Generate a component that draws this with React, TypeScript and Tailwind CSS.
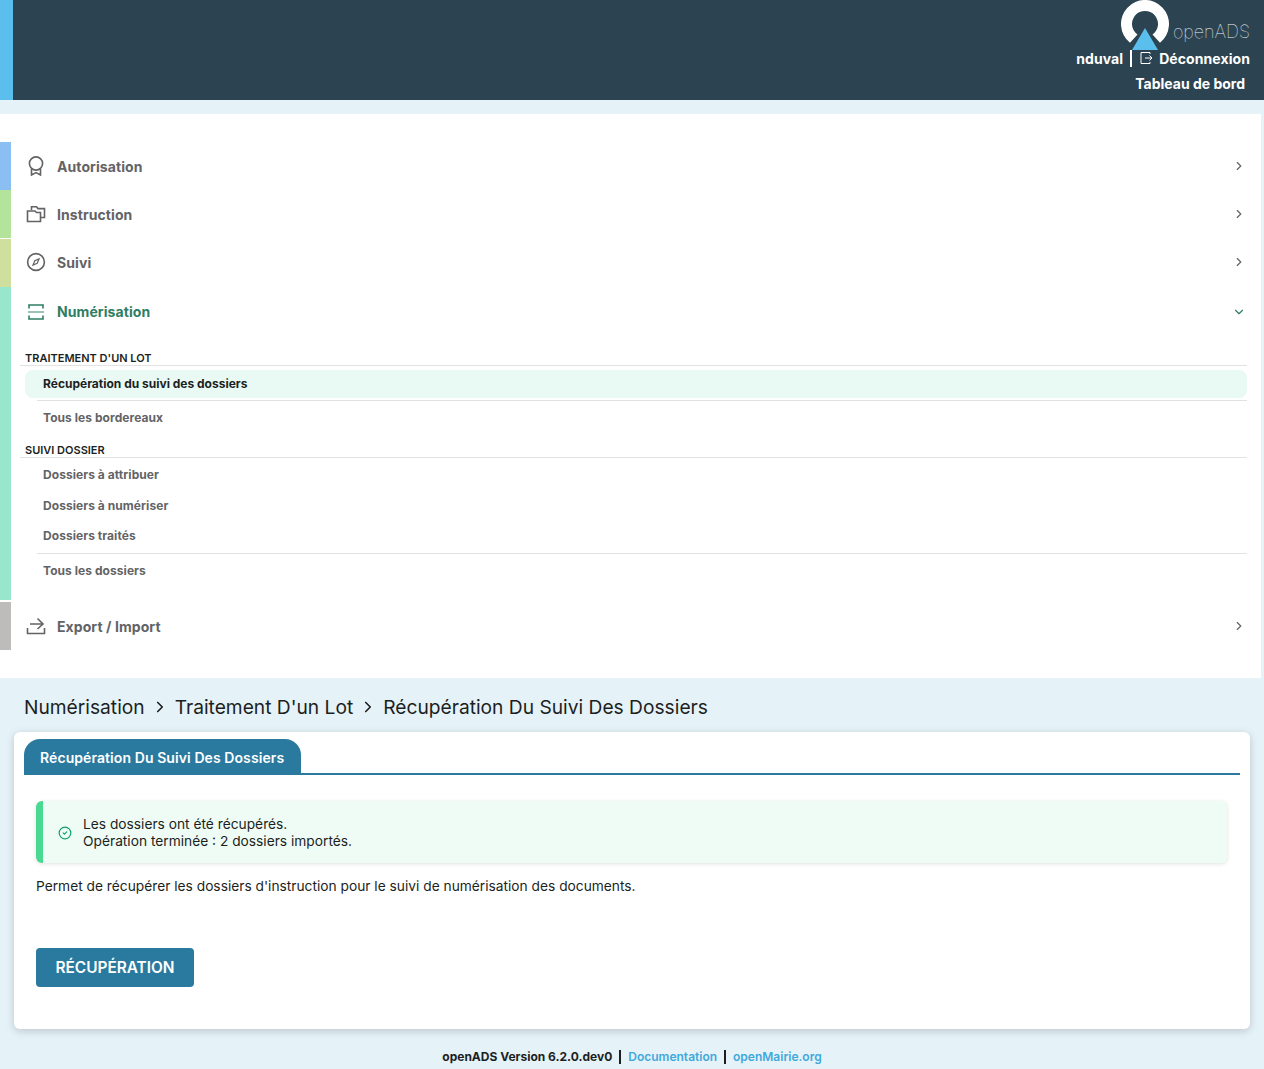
import React from 'react';
import { ChevronRight, ChevronDown, CircleCheck } from 'lucide-react';

const Chevron = () => <ChevronRight className="h-[14px] w-[14px] text-[#636366]" strokeWidth={2} />;

function MenuRow({ icon, label, strip, className = 'h-12' }: { icon: React.ReactNode; label: string; strip: string; className?: string }) {
  return (
    <div className={`flex items-stretch ${className}`}>
      <div className={`w-[11px] shrink-0 ${strip}`} />
      <div className="flex flex-1 items-center pl-[14px] pr-[15px]">
        <span className="flex w-[22px] justify-center text-[#636366]">{icon}</span>
        <span className="ml-[10px] flex-1 text-[14px] font-bold tracking-[0.08px] text-[#636366]">{label}</span>
        <Chevron />
      </div>
    </div>
  );
}

function SubLink({ label, className = '' }: { label: string; className?: string }) {
  return <div className={`pl-[32px] text-[12px] leading-[16px] font-bold tracking-[0.06px] text-[#636366] ${className}`}>{label}</div>;
}

export default function App() {
  return (
    <div className="min-h-[1069px] bg-[#e5f2f8] font-['Inter',sans-serif] text-[#1c1f22]">
      <header className="flex h-[100px] bg-[#2c4452] text-white">
        <div className="w-[13px] bg-[#5bbfee]" />
        <div className="flex flex-1 flex-col items-end pr-[14px]">
          <div className="flex h-[49px] items-start">
            <svg width="48" height="50" viewBox="0 0 48 50" className="mr-[4px] shrink-0">
              <path d="M9 42.7 A24 24 0 1 1 39 42.7 L31.5 34.6 A13 13 0 1 0 16.5 34.6 Z" fill="#ffffff" />
              <polygon points="24,28 37,50 11,50" fill="#5bbfee" />
            </svg>
            <span className="mt-[19px] text-[18px] leading-[26px] font-thin text-[#f0f4f6]">openADS</span>
          </div>
          <div className="flex h-[18px] items-center text-[14px] font-bold tracking-[0.08px]">
            <span>nduval</span>
            <span className="mx-[7px] h-[17px] w-[2px] bg-white" />
            <svg width="14" height="14" viewBox="0 0 14 14" fill="none" stroke="currentColor" strokeWidth="1">
              <path d="M11 3V1.5H2V12.5H11V11M6 7H13M10.5 4.5L13 7L10.5 9.5" />
            </svg>
            <span className="ml-[6px]">Déconnexion</span>
          </div>
          <div className="mt-[8px] mr-[5px] text-[14px] leading-[18px] font-bold">Tableau de bord</div>
        </div>
      </header>

      <nav className="mt-[14px] mr-[3px] bg-white py-[28px]">
        <MenuRow
          strip="bg-[#8bbef2]"
          label="Autorisation"
          icon={
            <svg width="20" height="20" viewBox="0 0 20 20" fill="none" stroke="currentColor" strokeWidth="1.6">
              <circle cx="10" cy="7.5" r="6.6" />
              <path d="M5.5 13V19L10 16.6L14.5 19V13" />
            </svg>
          }
        />
        <MenuRow
          strip="bg-[#b4e49b]"
          className="h-[49px] pb-px"
          label="Instruction"
          icon={
            <svg width="20" height="20" viewBox="0 0 20 20" fill="none" stroke="currentColor" strokeWidth="1.6">
              <path d="M5.5 6V2.8H10.5L12 4.6H18.5V13.5H15" />
              <path d="M1.5 7H9L10.5 8.5H14.5V17.5H1.5Z" />
            </svg>
          }
        />
        <MenuRow
          strip="bg-[#cfdf9e]"
          className="h-12 [&>div:last-child]:pb-[2px]"
          label="Suivi"
          icon={
            <svg width="20" height="20" viewBox="0 0 20 20" fill="none" stroke="currentColor" strokeWidth="1.6">
              <circle cx="10" cy="10" r="8.4" />
              <path d="M13 7L11.2 11.2L7 13L8.8 8.8Z" strokeWidth="1.2" />
            </svg>
          }
        />

        <div className="flex h-[313px] items-stretch">
          <div className="w-[11px] shrink-0 bg-[#98e6cb]" />
          <div className="flex-1">
            <div className="flex h-[49px] items-center pl-[14px] pr-[15px]">
              <span className="flex w-[22px] justify-center text-[#2f7d62]">
                <svg width="20" height="20" viewBox="0 0 20 20" fill="none" stroke="currentColor" strokeWidth="1.6">
                  <path d="M3 6.5V3H17V6.5M3 13.5V17H17V13.5" />
                  <path d="M2 10H18" strokeOpacity="0.6" />
                </svg>
              </span>
              <span className="ml-[10px] flex-1 text-[14px] font-bold tracking-[0.08px] text-[#2f7d62]">Numérisation</span>
              <ChevronDown className="h-[14px] w-[14px] text-[#2f7d62]" strokeWidth={2} />
            </div>

            <div className="mt-[15px] mr-[14px] ml-[9px] border-b border-[#e2e2e2] pl-[5px] text-[11px] leading-[14px] font-semibold uppercase">
              Traitement d'un lot
            </div>
            <div className="mt-[4px] mr-[14px] ml-[14px] flex h-[28px] items-center rounded-[8px] bg-[#e9f9f4] pl-[18px] text-[12px] font-bold">
              Récupération du suivi des dossiers
            </div>
            <div className="mt-[2px] mr-[14px] ml-[26px] h-px bg-[#e2e2e2]" />
            <SubLink label="Tous les bordereaux" className="mt-[9px]" />

            <div className="mt-[17px] mr-[14px] ml-[9px] border-b border-[#e2e2e2] pl-[5px] text-[11px] leading-[14px] font-semibold uppercase">
              Suivi dossier
            </div>
            <SubLink label="Dossiers à attribuer" className="mt-[9px]" />
            <SubLink label="Dossiers à numériser" className="mt-[15px]" />
            <SubLink label="Dossiers traités" className="mt-[14px]" />
            <div className="mt-[9px] mr-[14px] ml-[26px] h-px bg-[#e2e2e2]" />
            <SubLink label="Tous les dossiers" className="mt-[9px]" />
          </div>
        </div>

        <div className="mt-[2px]">
          <MenuRow
            strip="bg-[#bebcba]"
            label="Export / Import"
            icon={
              <svg width="20" height="20" viewBox="0 0 20 20" fill="none" stroke="currentColor" strokeWidth="1.6">
                <path d="M1.5 12V17.5H18.5V12" />
                <path d="M4 8H16.5M11.5 2.5L17 8L11.5 13" />
              </svg>
            }
          />
        </div>
      </nav>

      <div className="flex h-[54px] items-center pt-[4px] pl-[24px] text-[19.2px]">
        <span>Numérisation</span>
        <ChevronRight className="mx-[6px] h-[18px] w-[18px]" strokeWidth={2.2} />
        <span>Traitement D'un Lot</span>
        <ChevronRight className="mx-[6px] h-[18px] w-[18px]" strokeWidth={2.2} />
        <span>Récupération Du Suivi Des Dossiers</span>
      </div>

      <main className="mx-[14px] h-[297px] rounded-[6px] bg-white px-[10px] pt-[7px] shadow-[0_2px_8px_rgba(0,0,0,0.18)]">
        <div className="border-b-2 border-[#2a7aa0]">
          <div className="inline-flex h-[34px] items-center rounded-t-[16px] bg-[#2a7aa0] pt-[2px] pr-[17px] pl-[16px] text-[14px] font-semibold tracking-[0.08px] text-white">
            Récupération Du Suivi Des Dossiers
          </div>
        </div>
        <div className="px-[12px]">
          <div className="mt-[26px] mr-[1px] flex h-[62px] items-center rounded-[6px] border-l-[7px] border-[#4ad991] bg-[#effcf6] pt-[2px] pl-[15px] text-[13.75px] leading-[17px] shadow-[0_1px_4px_rgba(0,0,0,0.12)]">
            <CircleCheck className="h-[14px] w-[14px] text-[#0f9f6e]" strokeWidth={2} />
            <div className="ml-[11px]">
              <div>Les dossiers ont été récupérés.</div>
              <div>Opération terminée : 2 dossiers importés.</div>
            </div>
          </div>
          <p className="mt-[15px] text-[13.75px] leading-[17px]">
            Permet de récupérer les dossiers d'instruction pour le suivi de numérisation des documents.
          </p>
          <button className="mt-[53px] flex h-[39px] w-[158px] items-center justify-center rounded-[4px] bg-[#2a7aa0] text-[15.4px] font-semibold text-white">
            RÉCUPÉRATION
          </button>
        </div>
      </main>

      <footer className="mt-[19px] flex h-[18px] items-center justify-center text-[12px] font-semibold">
        <span className="font-bold">openADS Version 6.2.0.dev0</span>
        <span className="mx-[7px] h-[14px] w-[2px] bg-[#1c1f22]" />
        <span className="text-[#3fa9dc]">Documentation</span>
        <span className="mx-[7px] h-[14px] w-[2px] bg-[#1c1f22]" />
        <span className="text-[#3fa9dc]">openMairie.org</span>
      </footer>
    </div>
  );
}
